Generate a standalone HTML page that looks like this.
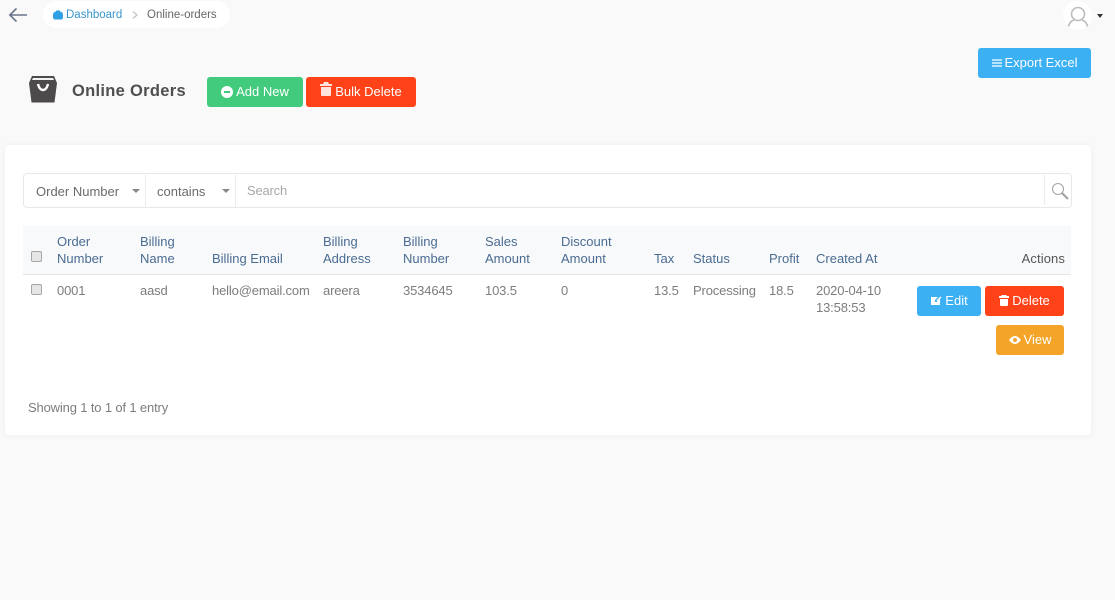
<!DOCTYPE html>
<html><head><meta charset="utf-8"><style>
html,body{margin:0;padding:0}
body{width:1115px;height:600px;background:#f9f9f9;position:relative;overflow:hidden;font-family:"Liberation Sans",sans-serif;font-size:13px;color:#777}
.a{position:absolute;white-space:nowrap;line-height:17px}
.h{color:#4a6c92;letter-spacing:0}
.t{color:#7d7d7d;letter-spacing:-.15px}
.s{color:#6b6b6b;letter-spacing:0}
.b{position:absolute;border-radius:3px;color:#fff;text-align:center;white-space:nowrap;font-size:13px;letter-spacing:0}
.cb{position:absolute;left:31px;width:9px;height:9px;background:#e6e6e6;border:1px solid #a5a5a5;border-radius:2px}
svg{position:absolute;display:block}
.b svg{position:static;display:inline-block;vertical-align:-1px;margin-right:3px}
</style></head><body>
<svg style="left:8px;top:7px" width="20" height="16" viewBox="0 0 20 16" fill="none" stroke="#69768a" stroke-width="1.6"><path d="M19 8H2M8.500 1.500L1.800 8l6.700 6.500"/></svg>
<div style="position:absolute;left:43px;top:1px;width:187px;height:27px;background:#fff;border-radius:14px"></div>
<svg style="left:53px;top:10px" width="10" height="10" viewBox="0 0 10 10"><path d="M3 1.500V.500h4v1q3 .5 3 3.500v2q0 2.500-2 2.500H2Q0 9.500 0 7V5q0-3 3-3.500z" fill="#2f9fe6"/></svg>
<div class="a" style="left:66px;top:7px;color:#3a95cc;font-size:11.500px">Dashboard</div>
<svg style="left:132px;top:11px" width="6" height="8" viewBox="0 0 6 8" fill="none" stroke="#c4c4c4" stroke-width="1.300"><path d="M1 .5L5 4 1 7.500"/></svg>
<div class="a" style="left:147px;top:7px;color:#666;font-size:11.500px">Online-orders</div>

<div style="position:absolute;left:1063px;top:1px;width:29px;height:29px;background:#fff;border-radius:50%"></div>
<svg style="left:1067px;top:6px" width="22" height="21" viewBox="0 0 22 21" fill="none" stroke="#bcbcbc" stroke-width="1.600"><circle cx="11" cy="8" r="6.500"/><path d="M1.500 20.500q1-5 5.500-6.500M20.500 20.500q-1-5-5.500-6.500"/></svg>
<div style="position:absolute;left:1097px;top:14px;border:3px solid transparent;border-top:4px solid #333;border-bottom:0"></div>

<div class="b" style="left:978px;top:48px;width:113px;height:30px;line-height:30px;background:#3bb0f2"><svg width="10" height="8" viewBox="0 0 10 8" fill="none" stroke="#fff" stroke-width="1.200" style="vertical-align:0"><path d="M0 1h10M0 4h10M0 7h10"/></svg>Export Excel</div>

<svg style="left:28px;top:75px" width="30" height="29" viewBox="0 0 30 29"><path d="M4 1H26L29 8 26.500 27.500H3.500L1 8z" fill="#4c4a4b"/><path d="M5 3H25L26 5H4z" fill="#f2f2f2"/><path d="M10 9q1.500 6 5 6t5-6" fill="none" stroke="#fff" stroke-width="2.400"/></svg>
<div class="a" style="left:72px;top:81px;font-size:16.500px;font-weight:bold;color:#4f4f4f;line-height:20px;letter-spacing:.3px">Online Orders</div>

<div class="b" style="left:207px;top:77px;width:96px;height:30px;line-height:30px;background:#42cb7d"><svg width="12" height="12" viewBox="0 0 12 12" style="vertical-align:-2px"><circle cx="6" cy="6" r="6" fill="#fff"/><rect x="3" y="5" width="6" height="2" fill="#42cb7d"/></svg>Add New</div>
<div class="b" style="left:306px;top:77px;width:110px;height:30px;line-height:30px;background:#ff4218"><svg width="12" height="14" viewBox="0 0 12 14" style="vertical-align:0"><path d="M4 0h4l1 2h3v2H0V2h3zM1 5h10v8q0 1-1 1H2q-1 0-1-1z" fill="#ffe3dc"/></svg>Bulk Delete</div>

<div style="position:absolute;left:5px;top:145px;width:1086px;height:290px;background:#fff;border-radius:4px;box-shadow:0 0 6px rgba(0,0,0,.05)"></div>

<div style="position:absolute;left:23px;top:173px;width:1047px;height:33px;border:1px solid #e8e8e8;border-radius:4px;background:#fff"></div>
<div style="position:absolute;left:145px;top:175px;width:1px;height:32px;background:#ececec"></div>
<div style="position:absolute;left:235px;top:175px;width:1px;height:32px;background:#ececec"></div>
<div style="position:absolute;left:1044px;top:175px;width:1px;height:30px;background:#ececec"></div>
<div class="a s" style="left:36px;top:183px">Order Number</div>
<div style="position:absolute;left:132px;top:189px;border:4px solid transparent;border-top:4px solid #888;border-bottom:0"></div>
<div class="a s" style="left:157px;top:183px">contains</div>
<div style="position:absolute;left:222px;top:189px;border:4px solid transparent;border-top:4px solid #888;border-bottom:0"></div>
<div class="a" style="left:247px;top:182px;color:#a8a8a8;letter-spacing:-.2px">Search</div>
<svg style="left:1051px;top:182px" width="18" height="18" viewBox="0 0 18 18" fill="none" stroke="#a5a5a5"><circle cx="7" cy="7" r="5.500" stroke-width="1.100"/><path d="M11 11l6 6" stroke-width="2.200"/></svg>

<div style="position:absolute;left:23px;top:226px;width:1048px;height:48px;background:#f8f9fb;border-bottom:1px solid #e6e6e6"></div>
<div class="cb" style="top:251px"></div>
<div class="cb" style="top:284px"></div>

<div class="a h" style="left:57px;top:233px">Order</div><div class="a h" style="left:57px;top:250px">Number</div>
<div class="a h" style="left:140px;top:233px">Billing</div><div class="a h" style="left:140px;top:250px">Name</div>
<div class="a h" style="left:212px;top:250px">Billing Email</div>
<div class="a h" style="left:323px;top:233px">Billing</div><div class="a h" style="left:323px;top:250px">Address</div>
<div class="a h" style="left:403px;top:233px">Billing</div><div class="a h" style="left:403px;top:250px">Number</div>
<div class="a h" style="left:485px;top:233px">Sales</div><div class="a h" style="left:485px;top:250px">Amount</div>
<div class="a h" style="left:561px;top:233px">Discount</div><div class="a h" style="left:561px;top:250px">Amount</div>
<div class="a h" style="left:654px;top:250px">Tax</div>
<div class="a h" style="left:693px;top:250px">Status</div>
<div class="a h" style="left:769px;top:250px">Profit</div>
<div class="a h" style="left:816px;top:250px">Created At</div>
<div class="a" style="right:50px;top:250px;color:#555;letter-spacing:.1px">Actions</div>

<div class="a t" style="left:57px;top:282px">0001</div>
<div class="a t" style="left:140px;top:282px">aasd</div>
<div class="a t" style="left:212px;top:282px">hello@email.com</div>
<div class="a t" style="left:323px;top:282px">areera</div>
<div class="a t" style="left:403px;top:282px">3534645</div>
<div class="a t" style="left:485px;top:282px">103.5</div>
<div class="a t" style="left:561px;top:282px">0</div>
<div class="a t" style="left:654px;top:282px">13.5</div>
<div class="a t" style="left:693px;top:282px">Processing</div>
<div class="a t" style="left:769px;top:282px">18.5</div>
<div class="a t" style="left:816px;top:282px">2020-04-10</div>
<div class="a t" style="left:816px;top:299px">13:58:53</div>

<div class="b" style="left:917px;top:286px;width:64px;height:30px;line-height:30px;background:#3bb0f2"><svg width="12" height="10" viewBox="0 0 12 10"><path d="M1 1h7L5 4v2h2l3-3v6H1z" fill="#fff"/><path d="M7 5l4-4" stroke="#fff" stroke-width="1.500"/></svg>Edit</div>
<div class="b" style="left:985px;top:286px;width:79px;height:30px;line-height:30px;background:#ff4218"><svg width="10" height="11" viewBox="0 0 10 11"><path d="M3 0h4l1 1h2v2H0V1h2zM1 4h8v6q0 1-1 1H2q-1 0-1-1z" fill="#fff"/></svg>Delete</div>
<div class="b" style="left:996px;top:325px;width:68px;height:30px;line-height:30px;background:#f4a428"><svg width="12" height="8" viewBox="0 0 12 8" style="vertical-align:0"><path d="M0 4q3-4 6-4t6 4q-3 4-6 4T0 4z" fill="#fff"/><circle cx="6" cy="4" r="2" fill="#f4a428"/></svg>View</div>

<div class="a t" style="left:28px;top:399px">Showing 1 to 1 of 1 entry</div>
</body></html>
